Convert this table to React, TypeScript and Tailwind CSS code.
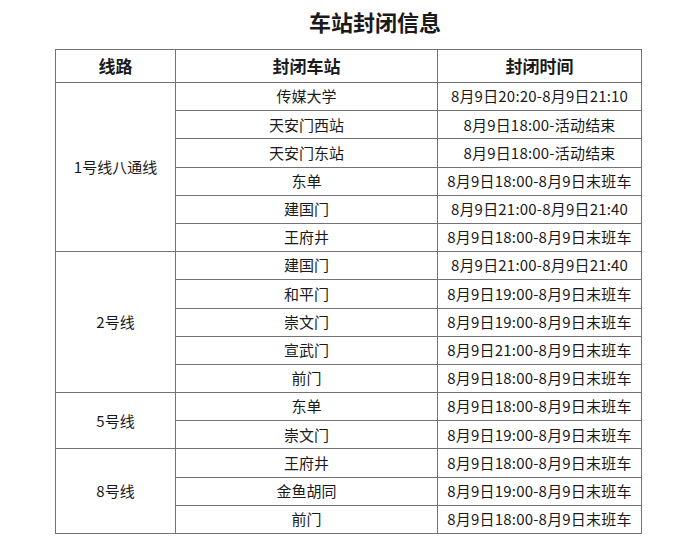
const font = { fontFamily: '"Noto Sans CJK SC", "Noto Sans", sans-serif' };

type Line = { name: string; stops: { station: string; time: string }[] };

const lines: Line[] = [
  {
    name: "1号线八通线",
    stops: [
      { station: "传媒大学", time: "8月9日20:20-8月9日21:10" },
      { station: "天安门西站", time: "8月9日18:00-活动结束" },
      { station: "天安门东站", time: "8月9日18:00-活动结束" },
      { station: "东单", time: "8月9日18:00-8月9日末班车" },
      { station: "建国门", time: "8月9日21:00-8月9日21:40" },
      { station: "王府井", time: "8月9日18:00-8月9日末班车" },
    ],
  },
  {
    name: "2号线",
    stops: [
      { station: "建国门", time: "8月9日21:00-8月9日21:40" },
      { station: "和平门", time: "8月9日19:00-8月9日末班车" },
      { station: "崇文门", time: "8月9日19:00-8月9日末班车" },
      { station: "宣武门", time: "8月9日21:00-8月9日末班车" },
      { station: "前门", time: "8月9日18:00-8月9日末班车" },
    ],
  },
  {
    name: "5号线",
    stops: [
      { station: "东单", time: "8月9日18:00-8月9日末班车" },
      { station: "崇文门", time: "8月9日19:00-8月9日末班车" },
    ],
  },
  {
    name: "8号线",
    stops: [
      { station: "王府井", time: "8月9日18:00-8月9日末班车" },
      { station: "金鱼胡同", time: "8月9日19:00-8月9日末班车" },
      { station: "前门", time: "8月9日18:00-8月9日末班车" },
    ],
  },
];

const cell = "border border-[#737373] text-center p-0";

export default function App() {
  return (
    <div className="w-[680px] h-[548px] bg-white text-[#1a1a1a]" style={font}>
      <div className="pt-[7px] pl-[70px] text-center text-[22px] leading-[28px] font-bold">
        车站封闭信息
      </div>
      <div className="mt-[14px] pl-[55px]">
        <table className="w-[586px] border-collapse table-fixed">
          <colgroup>
            <col className="w-[120px]" />
            <col className="w-[262px]" />
            <col className="w-[204px]" />
          </colgroup>
          <thead>
            <tr className="h-[33px] text-[17px] font-bold">
              <th className={cell}>线路</th>
              <th className={cell}>封闭车站</th>
              <th className={cell}>封闭时间</th>
            </tr>
          </thead>
          <tbody className="text-[15px]">
            {lines.map((line) =>
              line.stops.map((s, i) => (
                <tr key={line.name + i} className="h-[28.2px]">
                  {i === 0 && (
                    <td className={cell} rowSpan={line.stops.length}>
                      {line.name}
                    </td>
                  )}
                  <td className={cell}>{s.station}</td>
                  <td className={`${cell} tracking-[0.2px]`}>{s.time}</td>
                </tr>
              ))
            )}
          </tbody>
        </table>
      </div>
    </div>
  );
}
